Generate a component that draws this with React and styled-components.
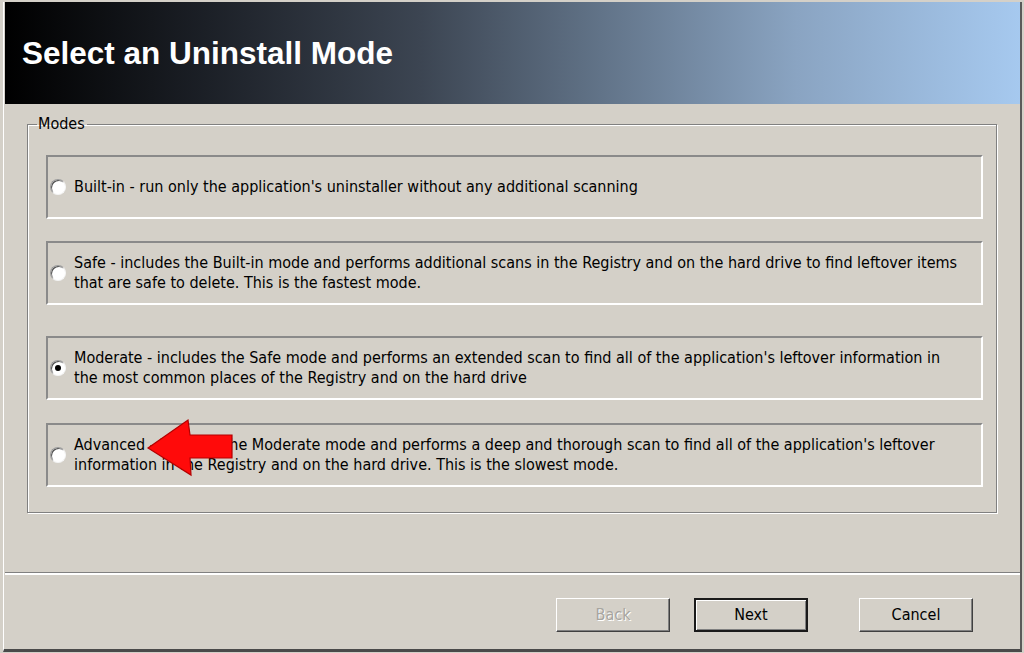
import React from 'react';
import styled, { createGlobalStyle } from 'styled-components';

const GlobalStyle = createGlobalStyle`
  html, body {
    margin: 0;
    padding: 0;
    background: #d4d0c8;
  }
  * {
    box-sizing: border-box;
  }
`;

const Screen = styled.div`
  width: 1024px;
  height: 653px;
  padding: 2px 2px 1px 3px;
  background: #d4d0c8;
  font-family: "DejaVu Sans Condensed", "DejaVu Sans", sans-serif;
  font-size: 16px;
  color: #000;
  overflow: hidden;
`;

const Frame = styled.div`
  display: flex;
  flex-direction: column;
  height: 100%;
  border-left: 1px solid #ffffff;
  border-right: 2px solid #5a5a5a;
  border-bottom: 3px solid #4a4a4a;
  padding-left: 1px;
`;

const Header = styled.div`
  display: flex;
  align-items: center;
  height: 102px;
  padding-left: 17px;
  background: linear-gradient(
    to right,
    #000000 0%,
    #1c2027 20%,
    #3c4552 41%,
    #627489 59%,
    #8aa4c2 78%,
    #a6c9ef 100%
  );
`;

const Title = styled.h1`
  margin: 0;
  font-family: "Liberation Sans", Arial, sans-serif;
  font-size: 31.5px;
  font-weight: 700;
  color: #ffffff;
`;

const Body = styled.div`
  flex: 1;
  padding: 12px 22px 0 22px;
`;

const GroupBox = styled.fieldset`
  margin: 0;
  width: 970px;
  height: 397px;
  padding: 23px 13px 0 18px;
  border: 1px solid #808080;
  box-shadow: inset 1px 1px 0 #ffffff, 1px 1px 0 #ffffff;
`;

const Legend = styled.legend`
  padding: 0 2px 0 1px;
  margin-left: -9px;
  line-height: 16px;
`;

const ModeBox = styled.label`
  display: flex;
  align-items: center;
  height: 64px;
  margin-top: ${(p) => p.$gap}px;
  padding-left: 2px;
  border-top: 2px solid #8a8a8a;
  border-left: 2px solid #8a8a8a;
  border-bottom: 2px solid #ffffff;
  border-right: 2px solid #ffffff;
  cursor: default;
`;

const Radio = styled.span`
  position: relative;
  flex: none;
  width: 16px;
  height: 16px;
  margin-right: 8px;
  border-radius: 50%;
  background: #ffffff;
  border: 1px solid;
  border-color: #9a9a9a #f4f4f4 #f4f4f4 #9a9a9a;
  box-shadow: inset 1px 1px 0 #505050;

  &::after {
    content: '';
    display: ${(p) => (p.$checked ? 'block' : 'none')};
    position: absolute;
    left: 4px;
    top: 4px;
    width: 6px;
    height: 6px;
    border-radius: 50%;
    background: #000;
  }
`;

const ModeText = styled.span`
  line-height: 20px;
  white-space: nowrap;
`;

const Arrow = styled.svg`
  position: absolute;
  left: 145px;
  top: 417px;
`;

const Separator = styled.div`
  height: 3px;
  border-top: 1px solid #808080;
  border-bottom: 2px solid #ffffff;
`;

const Footer = styled.div`
  display: flex;
  justify-content: flex-end;
  height: 74px;
  padding: 23px 47px 0 0;
`;

const Button = styled.button`
  width: 114px;
  height: 34px;
  margin-left: ${(p) => p.$gap}px;
  padding: 0 0 2px;
  font-family: inherit;
  font-size: 16px;
  background: #d4d0c8;
  color: ${(p) => (p.disabled ? '#a7a59f' : '#000')};
  text-shadow: ${(p) => (p.disabled ? '1px 1px 0 #ffffff' : 'none')};
  border: ${(p) => (p.$default ? '2px solid #1a1a1a' : '1px solid')};
  border-color: ${(p) => (p.$default ? '#1a1a1a' : '#ffffff #404040 #404040 #ffffff')};
  box-shadow: ${(p) =>
    p.$default
      ? 'inset 1px 1px 0 #ffffff, inset -1px -1px 0 #808080'
      : 'inset -1px -1px 0 #808080'};
`;

const modes = [
  {
    lines: ["Built-in - run only the application's uninstaller without any additional scanning"],
    gap: 0,
  },
  {
    lines: [
      'Safe - includes the Built-in mode and performs additional scans in the Registry and on the hard drive to find leftover items',
      'that are safe to delete. This is the fastest mode.',
    ],
    gap: 22,
  },
  {
    lines: [
      "Moderate - includes the Safe mode and performs an extended scan to find all of the application's leftover information in",
      'the most common places of the Registry and on the hard drive',
    ],
    gap: 31,
    checked: true,
  },
  {
    lines: [
      "Advanced - includes the Moderate mode and performs a deep and thorough scan to find all of the application's leftover",
      'information in the Registry and on the hard drive. This is the slowest mode.',
    ],
    gap: 23,
  },
];

export default function App() {
  return (
    <>
      <GlobalStyle />
      <Screen>
        <Frame>
          <Header>
            <Title>Select an Uninstall Mode</Title>
          </Header>
          <Body>
            <GroupBox>
              <Legend>Modes</Legend>
              {modes.map((m, i) => (
                <ModeBox key={i} $gap={m.gap}>
                  <Radio $checked={m.checked} />
                  <ModeText>
                    {m.lines.map((l, j) => (
                      <React.Fragment key={j}>
                        {j > 0 && <br />}
                        {l}
                      </React.Fragment>
                    ))}
                  </ModeText>
                </ModeBox>
              ))}
            </GroupBox>
          </Body>
          <Separator />
          <Footer>
            <Button disabled $gap={0}>Back</Button>
            <Button $default $gap={24}>Next</Button>
            <Button $gap={51}>Cancel</Button>
          </Footer>
        </Frame>
      </Screen>
      <Arrow width="92" height="62" viewBox="0 0 92 62">
        <polygon
          points="3,31 43,3 45,18 87,18 87,41 45,41 46,58"
          fill="#ff0a0a"
          stroke="#b30000"
          strokeWidth="1.2"
          strokeLinejoin="miter"
        />
      </Arrow>
    </>
  );
}
